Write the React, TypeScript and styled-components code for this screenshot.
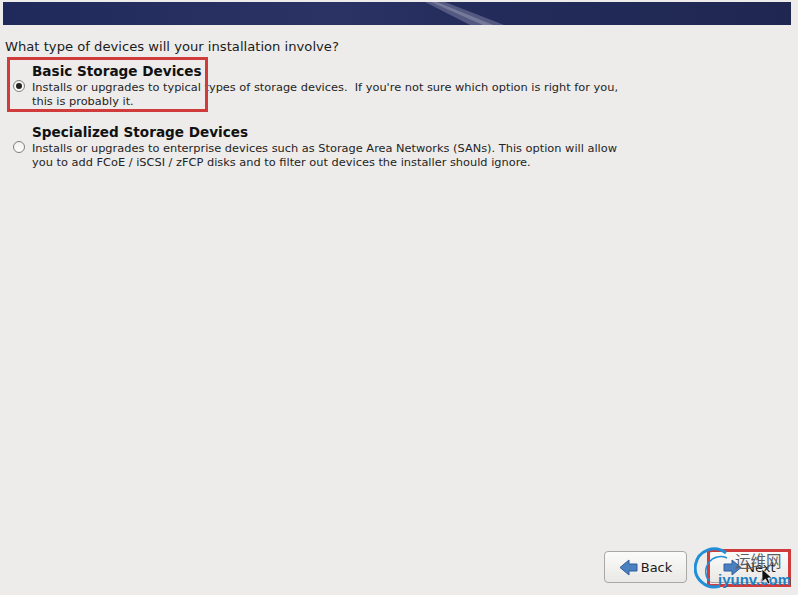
import React from "react";
import styled, { createGlobalStyle } from "styled-components";

const GlobalStyle = createGlobalStyle`
  html, body {
    margin: 0;
    padding: 0;
    height: 100%;
    background: #edecea;
  }
  #root {
    height: 100%;
  }
`;

const Page = styled.div`
  position: relative;
  width: 798px;
  height: 595px;
  overflow: hidden;
  display: flex;
  flex-direction: column;
  background: #edecea;
  color: #1c1c1c;
  font-family: "DejaVu Sans", sans-serif;
`;

const Banner = styled.div`
  height: 23px;
  margin: 2px 7px 0 3px;
  overflow: hidden;
  background: #212a58;
  flex: none;
`;

const BannerStreaks = styled.svg`
  display: block;
  width: 100%;
  height: 100%;
`;

const Content = styled.main`
  flex: 1;
  display: flex;
  flex-direction: column;
  padding: 14px 0 0 5px;
`;

const Question = styled.h1`
  margin: 0 0 8px;
  font-size: 13.15px;
  line-height: 16px;
  font-weight: 400;
`;

const OptionList = styled.div`
  display: flex;
  flex-direction: column;
  gap: 16px;
`;

const Option = styled.label`
  display: grid;
  grid-template-columns: 12px 1fr;
  column-gap: 7px;
  align-items: center;
  padding-left: 8px;
  width: 650px;
`;

const Radio = styled.span<{ $checked?: boolean }>`
  box-sizing: border-box;
  width: 12px;
  height: 12px;
  border-radius: 50%;
  border: 1px solid #807f7c;
  background: linear-gradient(#f2f1ef, #fdfdfc);
  display: flex;
  align-items: center;
  justify-content: center;

  &::after {
    content: "";
    display: ${(p) => (p.$checked ? "block" : "none")};
    width: 6px;
    height: 6px;
    border-radius: 50%;
    background: #222;
  }
`;

const OptionText = styled.div`
  display: flex;
  flex-direction: column;
`;

const OptionTitle = styled.div`
  font-size: 13.6px;
  line-height: 17px;
  font-weight: 700;
  color: #111;
`;

const OptionBody = styled.div`
  font-size: 11.37px;
  line-height: 14px;
  white-space: pre;
  color: #242424;
`;

const ButtonRow = styled.div`
  margin-top: auto;
  display: flex;
  justify-content: flex-end;
  gap: 21px;
  padding: 0 7px 12px 0;
`;

const NavButton = styled.button`
  box-sizing: border-box;
  width: 83px;
  height: 32px;
  display: flex;
  align-items: center;
  justify-content: center;
  gap: 3px;
  padding: 0;
  border: 1px solid #a9a8a5;
  border-radius: 4px;
  background: linear-gradient(#fbfbfa, #e9e8e5);
  font-family: inherit;
  font-size: 13px;
  color: #1c1c1c;
`;

const ArrowIcon = styled.svg<{ $flip?: boolean }>`
  width: 19px;
  height: 17px;
  transform: ${(p) => (p.$flip ? "scaleX(-1)" : "none")};
`;

const RedFrame = styled.div<{ $x: number; $y: number; $w: number; $h: number }>`
  position: absolute;
  left: ${(p) => p.$x}px;
  top: ${(p) => p.$y}px;
  width: ${(p) => p.$w}px;
  height: ${(p) => p.$h}px;
  box-sizing: border-box;
  border: 3px solid #d03c3c;
  pointer-events: none;
`;

const Watermark = styled.div`
  position: absolute;
  left: 692px;
  top: 546px;
  width: 106px;
  height: 49px;
  pointer-events: none;
`;

const WatermarkRing = styled.svg`
  position: absolute;
  left: 2px;
  top: 1px;
  width: 50px;
  height: 44px;
`;

const WatermarkCn = styled.span`
  position: absolute;
  left: 43px;
  top: 5px;
  font-family: "Noto Sans CJK SC", sans-serif;
  font-size: 15.5px;
  line-height: 18px;
  color: #5a6068;
`;

const WatermarkEn = styled.span`
  position: absolute;
  left: 26px;
  top: 25px;
  font-family: "Liberation Sans", sans-serif;
  font-size: 15px;
  line-height: 18px;
  font-weight: 700;
  color: #1f7fc4;
`;

const Cursor = styled.svg`
  position: absolute;
  left: 761px;
  top: 568px;
  width: 12px;
  height: 17px;
  pointer-events: none;
`;

const Arrow = ({ flip }: { flip?: boolean }) => (
  <ArrowIcon $flip={flip} viewBox="0 0 19 17">
    <path
      d="M1 8.5 L10 1 V5 H18 V12 H10 V16 Z"
      fill="#4a7fc0"
      stroke="#2f5f9e"
      strokeWidth="1"
      strokeLinejoin="round"
    />
  </ArrowIcon>
);

export default function App() {
  return (
    <Page>
      <GlobalStyle />
      <Banner>
        <BannerStreaks viewBox="0 0 788 23" preserveAspectRatio="none">
          <defs>
            <linearGradient id="bannerShade" x1="0" x2="1" y1="0" y2="0">
              <stop offset="0" stopColor="#1f2a5a" />
              <stop offset="0.42" stopColor="#2b3365" />
              <stop offset="0.62" stopColor="#232b5a" />
              <stop offset="1" stopColor="#1f2751" />
            </linearGradient>
          </defs>
          <rect width="788" height="23" fill="url(#bannerShade)" />
          <polygon points="422,0 442,0 501,23 467,23" fill="#8e90b0" opacity="0.45" />
          <polygon points="428,0 434,0 490,23 480,23" fill="#c4c4d4" opacity="0.3" />
        </BannerStreaks>
      </Banner>

      <Content>
        <Question>What type of devices will your installation involve?</Question>
        <OptionList>
          <Option>
            <Radio $checked />
            <OptionText>
              <OptionTitle>Basic Storage Devices</OptionTitle>
              <OptionBody>
                {"Installs or upgrades to typical types of storage devices.  If you're not sure which option is right for you,\nthis is probably it."}
              </OptionBody>
            </OptionText>
          </Option>
          <Option>
            <Radio />
            <OptionText>
              <OptionTitle>Specialized Storage Devices</OptionTitle>
              <OptionBody>
                {"Installs or upgrades to enterprise devices such as Storage Area Networks (SANs). This option will allow\nyou to add FCoE / iSCSI / zFCP disks and to filter out devices the installer should ignore."}
              </OptionBody>
            </OptionText>
          </Option>
        </OptionList>
        <ButtonRow>
          <NavButton>
            <Arrow />
            Back
          </NavButton>
          <NavButton>
            <Arrow flip />
            Next
          </NavButton>
        </ButtonRow>
      </Content>

      <RedFrame $x={7} $y={57} $w={201} $h={55} />
      <RedFrame $x={707} $y={549} $w={84} $h={38} />

      <Watermark>
        <WatermarkRing viewBox="0 0 50 44">
          <path d="M32 6 A19 19 0 1 0 26 39" fill="none" stroke="#1f8fd8" strokeWidth="3" />
          <path d="M33 11 A15 15 0 0 0 15 34" fill="none" stroke="#1f8fd8" strokeWidth="1.5" />
        </WatermarkRing>
        <WatermarkCn>运维网</WatermarkCn>
        <WatermarkEn>iyunv.com</WatermarkEn>
      </Watermark>
      <Cursor viewBox="0 0 12 17">
        <path d="M1 1 V14 L4.5 11 L7 16 L9 15 L6.8 10 H11 Z" fill="#111" stroke="#fff" strokeWidth="0.7" />
      </Cursor>
    </Page>
  );
}
